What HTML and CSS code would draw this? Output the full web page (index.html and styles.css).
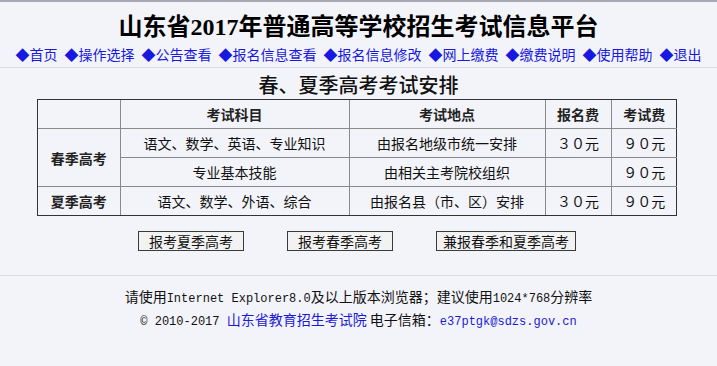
FILE: index.html
```html
<!DOCTYPE html>
<html lang="zh-CN">
<head>
  <meta charset="UTF-8" />
  <title>山东省2017年普通高等学校招生考试信息平台</title>
  <link rel="stylesheet" href="styles.css">
</head>
<body>
  <header class="top">
    <h1 class="site-title">山东省2017年普通高等学校招生考试信息平台</h1>
    <nav class="nav">
      <a href="#">◆首页</a>
      <a href="#">◆操作选择</a>
      <a href="#">◆公告查看</a>
      <a href="#">◆报名信息查看</a>
      <a href="#">◆报名信息修改</a>
      <a href="#">◆网上缴费</a>
      <a href="#">◆缴费说明</a>
      <a href="#">◆使用帮助</a>
      <a href="#">◆退出</a>
    </nav>
  </header>

  <main class="content">
    <h2 class="sub-title">春、夏季高考考试安排</h2>
    <div class="table-box">
      <table class="plan">
        <colgroup>
          <col class="c-type">
          <col class="c-subject">
          <col class="c-place">
          <col class="c-fee">
          <col class="c-fee">
        </colgroup>
        <thead>
          <tr>
            <th></th>
            <th>考试科目</th>
            <th>考试地点</th>
            <th>报名费</th>
            <th>考试费</th>
          </tr>
        </thead>
        <tbody>
          <tr>
            <th rowspan="2">春季高考</th>
            <td>语文、数学、英语、专业知识</td>
            <td>由报名地级市统一安排</td>
            <td class="fee">３０元</td>
            <td class="fee">９０元</td>
          </tr>
          <tr>
            <td>专业基本技能</td>
            <td>由相关主考院校组织</td>
            <td class="fee"></td>
            <td class="fee">９０元</td>
          </tr>
          <tr>
            <th>夏季高考</th>
            <td>语文、数学、外语、综合</td>
            <td>由报名县（市、区）安排</td>
            <td class="fee">３０元</td>
            <td class="fee">９０元</td>
          </tr>
        </tbody>
      </table>
    </div>

    <div class="actions">
      <button type="button" class="btn">报考夏季高考</button>
      <button type="button" class="btn">报考春季高考</button>
      <button type="button" class="btn btn-wide">兼报春季和夏季高考</button>
    </div>
  </main>

  <footer class="foot">
    <p>请使用<span class="mono">Internet Explorer8.0</span>及以上版本浏览器；建议使用<span class="mono">1024*768</span>分辨率</p>
    <p><span class="mono">© 2010-2017 </span><a href="#">山东省教育招生考试院</a> 电子信箱：<a href="#" class="mono">e37ptgk@sdzs.gov.cn</a></p>
  </footer>
</body>
</html>
```

FILE: styles.css
```css
body {
  margin: 0;
  background-color: #f3f4f9;
  border-top: 2px solid #a8a9b2;
  color: #111;
  font-family: "Noto Sans CJK SC", sans-serif;
  font-size: 14px;
}
a {
  color: #1a1ad8;
  text-decoration: none;
}
.top {
  text-align: center;
  border-bottom: 1px solid #dcdcee;
  padding-bottom: 3px;
}
.site-title {
  margin: 0;
  padding-top: 10px;
  font-family: "Liberation Serif", "Noto Sans CJK SC", serif;
  font-size: 24px;
  line-height: 30px;
  font-weight: bold;
  color: #000;
}
.nav {
  display: flex;
  justify-content: center;
  gap: 7px;
  line-height: 20px;
  margin-top: 2px;
}
.nav a {
  color: #1818e0;
}
.content {
  text-align: center;
}
.sub-title {
  margin: 6px 0 1px;
  font-family: "Liberation Serif", "Noto Sans CJK SC", serif;
  font-size: 20px;
  line-height: 24px;
  font-weight: 500;
  color: #111;
}
.table-box {
  width: 638px;
  margin-left: 37px;
  border: 1px solid #333;
}
.plan {
  width: 100%;
  border-collapse: collapse;
  border-style: hidden;
  table-layout: fixed;
}
.c-type { width: 82px; }
.c-subject { width: 229px; }
.c-place { width: 196px; }
.c-fee { width: 66px; }
.plan th, .plan td {
  border: 1px solid #8a8a8a;
  height: 28px;
  padding: 0;
  text-align: center;
  line-height: 20px;
}
.plan th {
  font-weight: bold;
  color: #222;
}
.plan td {
  color: #111;
}
.actions {
  display: flex;
  justify-content: center;
  gap: 43px;
  margin-top: 15px;
  padding-right: 3px;
}
.btn {
  height: 20px;
  padding: 0 10px;
  border: 1px solid #3a3a3a;
  background-color: #f2f2f2;
  font-family: "Noto Sans CJK SC", sans-serif;
  font-size: 14px;
  line-height: 18px;
  color: #111;
}
.btn-wide {
  padding: 0 6px;
}
.foot {
  margin-top: 24px;
  border-top: 1px solid #dcdcee;
  padding-top: 10px;
  text-align: center;
}
.foot p {
  margin: 0;
  line-height: 20px;
}
.mono {
  font-family: "Liberation Mono", monospace;
  font-size: 12px;
}
```
